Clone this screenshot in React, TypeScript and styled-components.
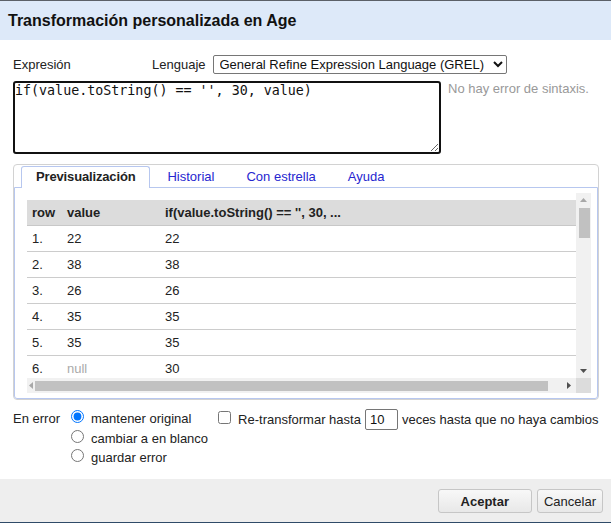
import React from 'react';
import styled, { createGlobalStyle } from 'styled-components';

const GlobalStyle = createGlobalStyle`
  html, body { margin: 0; padding: 0; background: #fff; }
  body {
    font-family: "Liberation Sans", Arial, sans-serif;
    font-size: 13px;
    color: #222;
  }
`;

const Dialog = styled.div`
  display: flex;
  flex-direction: column;
  width: 611px;
  height: 523px;
  box-sizing: border-box;
  border-top: 1px solid #5b6068;
  border-bottom: 1px solid #2f4b68;
  background: #fff;
`;

const Header = styled.div`
  height: 39px;
  display: flex;
  align-items: center;
  padding: 0 8px;
  background: #dde9f9;
  font-size: 16px;
  font-weight: bold;
  color: #111;
`;

const Body = styled.div`
  flex: 1;
  padding: 15px 0 0 13px;
`;

const LangRow = styled.div`
  display: flex;
  align-items: center;
  height: 18px;
`;

const ExprLabel = styled.span`
  width: 139px;
`;

const LangLabel = styled.span`
  margin-right: 7px;
`;

const LangSelect = styled.select`
  width: 294px;
  height: 19px;
  margin: 0;
  padding: 0 0 0 2px;
  font-family: "Liberation Sans", Arial, sans-serif;
  font-size: 13px;
  color: #111;
  border: 1px solid #767676;
  border-radius: 2px;
  background: #fff;
`;

const EditorRow = styled.div`
  display: flex;
  gap: 7px;
  margin-top: 8px;
`;

const ExprArea = styled.textarea`
  width: 428px;
  height: 73px;
  box-sizing: border-box;
  margin: 0;
  padding: 0;
  border: 2px solid #111;
  border-radius: 3px;
  outline: none;
  font-family: "DejaVu Sans Mono", monospace;
  font-size: 13.33px;
  color: #111;
`;

const Status = styled.div`
  color: #999;
`;

const TabsBox = styled.div`
  margin-top: 10px;
  width: 586px;
  box-sizing: border-box;
  border: 1px solid #d2d2d2;
  border-radius: 4px;
`;

const TabNav = styled.div`
  display: flex;
  align-items: flex-end;
  height: 22px;
  padding-left: 7px;
`;

const Tab = styled.div<{ $active?: boolean }>`
  position: relative;
  z-index: 1;
  height: 22px;
  box-sizing: border-box;
  margin: 0 2px -1px 0;
  padding: 0 14px 2px;
  display: flex;
  align-items: center;
  border: 1px solid ${p => (p.$active ? '#b7c7ef' : 'transparent')};
  border-bottom: none;
  border-radius: 3px 3px 0 0;
  background: ${p => (p.$active ? '#fff' : 'transparent')};
  color: ${p => (p.$active ? '#222' : '#2626d0')};
  font-weight: ${p => (p.$active ? 'bold' : 'normal')};
  letter-spacing: ${p => (p.$active ? '-0.15px' : 'normal')};
`;

const Panel = styled.div`
  height: 212px;
  box-sizing: border-box;
  border: 1px solid #b7c7ef;
  border-radius: 0 0 3px 3px;
  padding: 5px 6px 5px 12px;
`;

const ScrollArea = styled.div`
  display: grid;
  grid-template-columns: 549px 15px;
  grid-template-rows: 185px 15px;
`;

const Viewport = styled.div`
  overflow: hidden;
  padding-top: 7px;
  box-sizing: border-box;
`;

const Table = styled.table`
  width: 100%;
  border-collapse: collapse;
`;

const HeadCell = styled.th<{ $w?: number }>`
  height: 25px;
  padding: 0 0 0 5px;
  text-align: left;
  font-weight: bold;
  background: #dcdcdc;
  border-bottom: 1px solid #c8c8c8;
  width: ${p => (p.$w ? `${p.$w}px` : 'auto')};
`;

const Cell = styled.td<{ $muted?: boolean }>`
  height: 25px;
  padding: 0 0 0 5px;
  border-bottom: 1px solid #cccccc;
  color: ${p => (p.$muted ? '#aaa' : '#222')};
`;

const VBar = styled.div`
  display: flex;
  flex-direction: column;
  align-items: center;
  background: #f1f1f1;
`;

const HBar = styled.div`
  display: flex;
  align-items: center;
  background: #f1f1f1;
`;

const ArrowBtn = styled.div<{ $w: number; $h: number }>`
  display: flex;
  align-items: center;
  justify-content: center;
  flex: none;
  width: ${p => p.$w}px;
  height: ${p => p.$h}px;
`;

const VThumb = styled.div`
  width: 11px;
  height: 30px;
  margin: 1px 0 0 1px;
  background: #c1c1c1;
`;

const HThumb = styled.div`
  width: 513px;
  height: 10px;
  margin-top: 1px;
  background: #c1c1c1;
`;

const Spacer = styled.div`
  flex: 1;
`;

const Corner = styled.div`
  background: #dcdcdc;
`;

const OptionsRow = styled.div`
  display: flex;
  align-items: flex-start;
  margin-top: 9px;
`;

const OnErrorLabel = styled.span`
  width: 58px;
  line-height: 19px;
`;

const RadioGroup = styled.div`
  display: flex;
  flex-direction: column;
`;

const Choice = styled.label`
  display: flex;
  align-items: center;
  gap: 7px;
  height: 19.5px;
  white-space: nowrap;
`;

const Radio = styled.input`
  width: 13px;
  height: 13px;
  margin: -2px 0 2px 0;
`;

const RepeatGroup = styled.div`
  display: flex;
  align-items: center;
  height: 20px;
  margin-left: 10px;
  white-space: nowrap;
`;

const Check = styled.input`
  width: 13px;
  height: 13px;
  margin: -2px 7px 2px 0;
`;

const CountInput = styled.input`
  width: 33px;
  height: 21px;
  box-sizing: border-box;
  margin: 0 4px;
  padding: 1px 4px 0;
  border: 1px solid #767676;
  border-radius: 2px;
  font-family: "Liberation Sans", Arial, sans-serif;
  font-size: 13px;
  color: #111;
`;

const Footer = styled.div`
  height: 43px;
  display: flex;
  justify-content: flex-end;
  align-items: flex-start;
  gap: 5px;
  padding: 10px 8px 0 0;
  box-sizing: border-box;
  background: #eeeeee;
`;

const Button = styled.button<{ $primary?: boolean }>`
  height: 24px;
  margin: 0;
  padding: 0 ${p => (p.$primary ? '22px' : '6px')};
  border: 1px solid #c6c6c6;
  border-radius: 3px;
  background: linear-gradient(#f8f8f8, #e8e8e8);
  font-family: "Liberation Sans", Arial, sans-serif;
  font-size: 13px;
  font-weight: ${p => (p.$primary ? 'bold' : 'normal')};
  color: #222;
`;

type Dir = 'up' | 'down' | 'left' | 'right';

const Arrow = ({ dir, color }: { dir: Dir; color: string }) => {
  const pts = {
    up: '0,4 7,4 3.5,0',
    down: '0,0 7,0 3.5,4',
    left: '4,0 4,7 0,3.5',
    right: '0,0 0,7 4,3.5',
  }[dir];
  const vertical = dir === 'up' || dir === 'down';
  return (
    <svg width={vertical ? 7 : 4} height={vertical ? 4 : 7} viewBox={vertical ? '0 0 7 4' : '0 0 4 7'}>
      <polygon points={pts} fill={color} />
    </svg>
  );
};

const rows = [
  ['1.', '22', '22'],
  ['2.', '38', '38'],
  ['3.', '26', '26'],
  ['4.', '35', '35'],
  ['5.', '35', '35'],
  ['6.', 'null', '30'],
];

const tabs = ['Previsualización', 'Historial', 'Con estrella', 'Ayuda'];

export default function App() {
  return (
    <>
      <GlobalStyle />
      <Dialog>
        <Header>Transformación personalizada en Age</Header>
        <Body>
          <LangRow>
            <ExprLabel>Expresión</ExprLabel>
            <LangLabel>Lenguaje</LangLabel>
            <LangSelect defaultValue="grel">
              <option value="grel">General Refine Expression Language (GREL)</option>
            </LangSelect>
          </LangRow>
          <EditorRow>
            <ExprArea defaultValue="if(value.toString() == '', 30, value)" spellCheck={false} />
            <Status>No hay error de sintaxis.</Status>
          </EditorRow>

          <TabsBox>
            <TabNav>
              {tabs.map((t, i) => (
                <Tab key={t} $active={i === 0}>{t}</Tab>
              ))}
            </TabNav>
            <Panel>
              <ScrollArea>
                <Viewport>
                  <Table>
                    <thead>
                      <tr>
                        <HeadCell $w={30}>row</HeadCell>
                        <HeadCell $w={93}>value</HeadCell>
                        <HeadCell>if(value.toString() == '', 30, ...</HeadCell>
                      </tr>
                    </thead>
                    <tbody>
                      {rows.map(r => (
                        <tr key={r[0]}>
                          <Cell>{r[0]}</Cell>
                          <Cell $muted={r[1] === 'null'}>{r[1]}</Cell>
                          <Cell>{r[2]}</Cell>
                        </tr>
                      ))}
                    </tbody>
                  </Table>
                </Viewport>
                <VBar>
                  <ArrowBtn $w={15} $h={14}><Arrow dir="up" color="#a8a8a8" /></ArrowBtn>
                  <VThumb />
                  <Spacer />
                  <ArrowBtn $w={15} $h={14}><Arrow dir="down" color="#505050" /></ArrowBtn>
                </VBar>
                <HBar>
                  <ArrowBtn $w={8} $h={15}><Arrow dir="left" color="#a8a8a8" /></ArrowBtn>
                  <HThumb />
                  <Spacer />
                  <ArrowBtn $w={14} $h={15}><Arrow dir="right" color="#505050" /></ArrowBtn>
                </HBar>
                <Corner />
              </ScrollArea>
            </Panel>
          </TabsBox>

          <OptionsRow>
            <OnErrorLabel>En error</OnErrorLabel>
            <RadioGroup>
              <Choice><Radio type="radio" name="onerror" defaultChecked />mantener original</Choice>
              <Choice><Radio type="radio" name="onerror" />cambiar a en blanco</Choice>
              <Choice><Radio type="radio" name="onerror" />guardar error</Choice>
            </RadioGroup>
            <RepeatGroup>
              <Check type="checkbox" />
              Re-transformar hasta
              <CountInput type="text" defaultValue="10" />
              veces hasta que no haya cambios
            </RepeatGroup>
          </OptionsRow>
        </Body>
        <Footer>
          <Button $primary>Aceptar</Button>
          <Button>Cancelar</Button>
        </Footer>
      </Dialog>
    </>
  );
}
